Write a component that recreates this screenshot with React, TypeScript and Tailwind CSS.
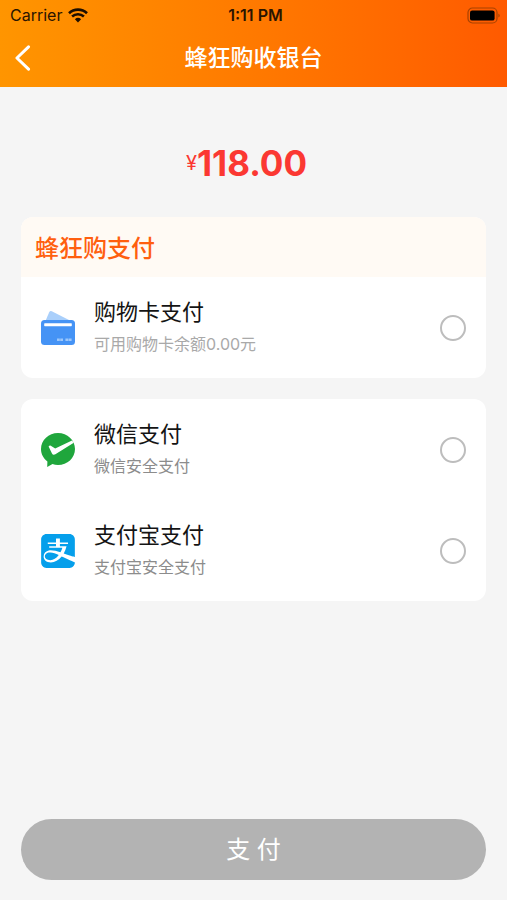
import { useState, type ReactNode } from "react";
import { SiAlipay } from "react-icons/si";

type Method = {
  id: string;
  name: string;
  note: string;
  noteClass: string;
  icon: ReactNode;
};

function WifiIcon() {
  return (
    <svg viewBox="0 0 20 15" className="h-[15px] w-5" aria-hidden="true" fill="none" stroke="#1c0e00">
      <path d="M1 5.2A13 13 0 0 1 19 5.2" strokeWidth="2.6" />
      <path d="M4.1 8.5A8.6 8.6 0 0 1 15.9 8.5" strokeWidth="2.5" />
      <path d="M10 14.4L6.9 11.3A4.5 4.5 0 0 1 13.1 11.3Z" fill="#1c0e00" stroke="none" />
    </svg>
  );
}

function BatteryIcon() {
  return (
    <svg viewBox="0 0 34 17" className="h-[17px] w-[34px]" aria-hidden="true">
      <rect x="1" y="1" width="29" height="15" rx="4.5" fill="none" stroke="#a84300" strokeWidth="1.2" />
      <rect x="3" y="3.4" width="24.6" height="10.2" rx="2.2" fill="#000" />
      <path d="M31.4 6.4V10.6C33.2 9.8 33.2 7.2 31.4 6.4Z" fill="#a84300" />
    </svg>
  );
}

function CardIcon() {
  return (
    <svg viewBox="0 0 34 34" className="size-[34px]" aria-hidden="true">
      <path d="M4 11L8.2 1.2Q9 -0.4 10.8 .3L29 9.5V12H4Z" fill="#a9cffb" />
      <rect x="0" y="9" width="34" height="25" rx="3.5" fill="#4593f5" />
      <rect x="3.2" y="12.2" width="27.6" height="3" rx=".6" fill="#fff" />
      <path d="M16 28.8H22.4M24.4 28.8H31" stroke="#9cc7fb" strokeWidth="2.4" strokeDasharray="2.8 .4" />
    </svg>
  );
}

function WechatPayIcon() {
  return (
    <svg viewBox="0 0 34 34" className="size-[34px]" aria-hidden="true">
      <path
        d="M17 0C26.4 0 34 7 34 16C34 25 26.4 32 17 32C15 32 13.2 31.7 11.5 31.1L6.2 34L6.4 28.4C2.5 25.5 0 21.1 0 16C0 7 7.6 0 17 0Z"
        fill="#1fa63c"
      />
      <path
        d="M7.6 13.4C8.4 12.3 9.6 12.3 10.6 13.2L14.2 15.6L31 7.4L32.8 9.8L14.4 21.2C13 22 11.6 21.8 11 20.5Z"
        fill="#fff"
      />
    </svg>
  );
}

const cardMethods: Method[] = [
  { id: "card", name: "购物卡支付", note: "可用购物卡余额0.00元", noteClass: "text-[#a9a9a9]", icon: <CardIcon /> },
];

const appMethods: Method[] = [
  { id: "wechat", name: "微信支付", note: "微信安全支付", noteClass: "text-[#8c8c8c]", icon: <WechatPayIcon /> },
  {
    id: "alipay",
    name: "支付宝支付",
    note: "支付宝安全支付",
    noteClass: "text-[#8c8c8c]",
    icon: <SiAlipay className="size-[34px] text-[#059feb]" aria-hidden="true" />,
  },
];

function MethodRow({ method, selected, onSelect }: { method: Method; selected: boolean; onSelect: (id: string) => void }) {
  return (
    <label htmlFor={method.id} className="flex cursor-pointer items-center px-5 pt-[19px] pb-[18px]">
      {method.icon}
      <span className="ml-[19px] flex flex-1 flex-col">
        <span className="text-[22px] leading-8 text-[#141414]">{method.name}</span>
        <span className={`text-base leading-8 ${method.noteClass}`}>{method.note}</span>
      </span>
      <input
        id={method.id}
        type="radio"
        name="payment"
        checked={selected}
        onChange={() => onSelect(method.id)}
        className="size-[26px] appearance-none rounded-full border-2 border-[#bdbdbd] bg-white checked:border-8 checked:border-[#ff5a00]"
      />
    </label>
  );
}

export default function App() {
  const [method, setMethod] = useState("");

  return (
    <div className="flex min-h-screen flex-col bg-[#f5f5f5] font-[Inter,'Noto_Sans_CJK_SC',sans-serif]">
      <header className="bg-linear-to-r from-[#ff9500] to-[#ff5a00]">
        <div className="grid h-[30px] grid-cols-3 items-center pr-[6px] pl-[10px] text-base text-[#2a1400]">
          <div className="flex items-center gap-[6px]">
            <span>Carrier</span>
            <WifiIcon />
          </div>
          <span className="text-center font-semibold">1:11 PM</span>
          <span className="justify-self-end">
            <BatteryIcon />
          </span>
        </div>
        <div className="grid h-[57px] grid-cols-[40px_1fr_40px] items-center">
          <button type="button" aria-label="返回" className="pb-0.5 pl-[14px]">
            <svg viewBox="0 0 18 28" className="h-[26px] w-[17px]" fill="none" stroke="#fff" strokeWidth="3.2" aria-hidden="true">
              <path d="M15.5 2L3 14L15.5 26" strokeLinejoin="round" strokeLinecap="round" />
            </svg>
          </button>
          <h1 className="text-center text-[23px] font-medium text-white">蜂狂购收银台</h1>
        </div>
      </header>

      <main className="flex flex-1 flex-col px-[21px] pb-5">
        <p className="flex h-[130px] items-center justify-center pt-[22px] pr-[14px] text-[#fb3832]">
          <span className="text-xl">¥</span>
          <span className="text-[35px] font-bold">118.00</span>
        </p>

        <section className="overflow-hidden rounded-xl bg-white">
          <h2 className="flex h-[60px] items-center bg-[#fffaf4] px-[14px] pt-1 text-2xl font-medium text-[#ff5f0f]">
            蜂狂购支付
          </h2>
          {cardMethods.map((m) => (
            <MethodRow key={m.id} method={m} selected={method === m.id} onSelect={setMethod} />
          ))}
        </section>

        <section className="mt-[21px] rounded-xl bg-white">
          {appMethods.map((m) => (
            <MethodRow key={m.id} method={m} selected={method === m.id} onSelect={setMethod} />
          ))}
        </section>

        <button
          type="button"
          disabled={!method}
          className="mt-auto h-[61px] rounded-full bg-[#ff5a00] text-2xl text-white disabled:bg-[#b3b3b3]"
        >
          支 付
        </button>
      </main>
    </div>
  );
}
